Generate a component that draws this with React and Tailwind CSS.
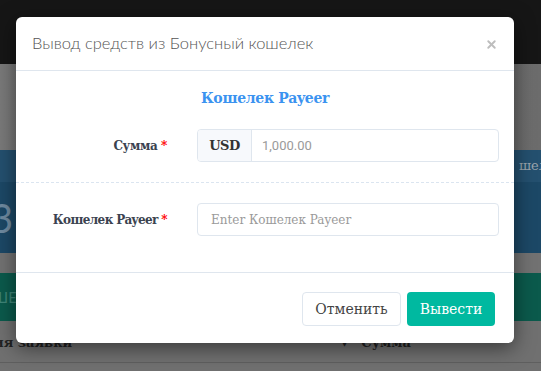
import { X } from 'lucide-react';

const slab = { fontFamily: '"DejaVu Serif", "Liberation Serif", serif' };

export default function App() {
    return (
        <div className="relative w-[541px] h-[371px] overflow-hidden bg-[#777]">
            {/* page behind the backdrop */}
            <div className="flex flex-col w-full h-full" style={slab}>
                <div className="h-[64px] bg-[#161616]" />
                <div className="h-[86px] bg-gradient-to-r from-[#7a7a7a] to-[#6c6c6c]" />
                <div className="h-[32px] bg-[#24506f] flex items-center justify-end">
                    <span className="text-[13px] text-[#9aa4ad] translate-x-[6px]">шел</span>
                </div>
                <div className="h-[71px] bg-[#1c4866] flex items-center">
                    <span className="text-[40px] text-[#6f8aa0] -translate-x-[10px]" style={{ fontFamily: 'Lato, sans-serif' }}>3</span>
                </div>
                <div className="h-[20px] bg-[#727272]" />
                <div className="h-[48px] bg-[#0b5a4c] flex items-center">
                    <span className="text-[15px] text-[#3f8578] -translate-x-[8px]" style={{ fontFamily: 'Lato, sans-serif' }}>ШЕЛ</span>
                </div>
                <div className="h-[42px] bg-[#707070] flex items-center justify-between pr-[130px] border-b border-[#5f5f5f]">
                    <span className="text-[13px] font-bold text-[#222] -translate-x-[6px] translate-y-[1px]">ия заявки</span>
                    <span className="text-[13px] font-bold text-[#222] translate-y-[1px]">▾ &nbsp;&nbsp;Сумма</span>
                </div>
                <div className="flex-1 bg-[#707070]" />
            </div>

            {/* modal */}
            <div className="absolute left-[16px] top-[17px] w-[498px] h-[326px] bg-white rounded-[6px] shadow-[0_5px_20px_rgba(0,0,0,0.5)] flex flex-col">
                <div className="h-[54px] flex items-center justify-between px-4 border-b border-[#dfe6ee]">
                    <h3 className="text-[16.5px] font-light text-[#555]" style={{ fontFamily: 'Lato, "Open Sans", sans-serif' }}>
                        Вывод средств из Бонусный кошелек
                    </h3>
                    <X size={13} strokeWidth={3.5} className="text-[#bdbdbd] mt-[2px]" />
                </div>

                <div className="flex flex-col" style={slab}>
                    <p className="text-center text-[14px] font-bold text-[#3b93f0] mt-[17px] leading-5 tracking-[-0.3px]">Кошелек Payeer</p>

                    <div className="flex items-center mt-[21px] pr-[15px]">
                        <label className="w-[151px] text-right text-[12px] font-bold text-[#3b4350] tracking-[-0.4px]">
                            Сумма <span className="text-[#f00]">*</span>
                        </label>
                        <div className="ml-[30px] flex-1 flex h-[33px] rounded-[4px] border border-[#dfe6ee] overflow-hidden">
                            <span className="w-[54px] flex items-center justify-center bg-[#f7f9fc] border-r border-[#dfe6ee] text-[13px] font-bold text-[#333] tracking-[-0.5px]">USD</span>
                            <span className="flex-1 flex items-center pl-[10px] text-[13px] text-[#9a9a9a]" style={{ fontFamily: 'Roboto, sans-serif' }}>1,000.00</span>
                        </div>
                    </div>

                    <div className="mt-[20px] border-t border-dashed border-[#dbe5f0]" />

                    <div className="flex items-center mt-[20px] pr-[15px]">
                        <label className="w-[151px] text-right text-[12px] font-bold text-[#3b4350] tracking-[-0.6px]">
                            Кошелек Payeer <span className="text-[#f00]">*</span>
                        </label>
                        <div className="ml-[30px] flex-1 flex items-center h-[33px] rounded-[4px] border border-[#dfe6ee] pl-[13px] text-[12px] text-[#9a9a9a]">
                            Enter Кошелек Payeer
                        </div>
                    </div>
                </div>

                <div className="mt-[36px] border-t border-[#dfe6ee] flex justify-end gap-[6px] pr-[19px] pt-[19px]" style={slab}>
                    <button className="w-[99px] h-[34px] rounded-[4px] border border-[#dfe6ee] bg-white text-[14px] text-[#444]">Отменить</button>
                    <button className="w-[88px] h-[34px] rounded-[4px] bg-[#00b9a0] text-[14px] text-white">Вывести</button>
                </div>
            </div>
        </div>
    );
}
